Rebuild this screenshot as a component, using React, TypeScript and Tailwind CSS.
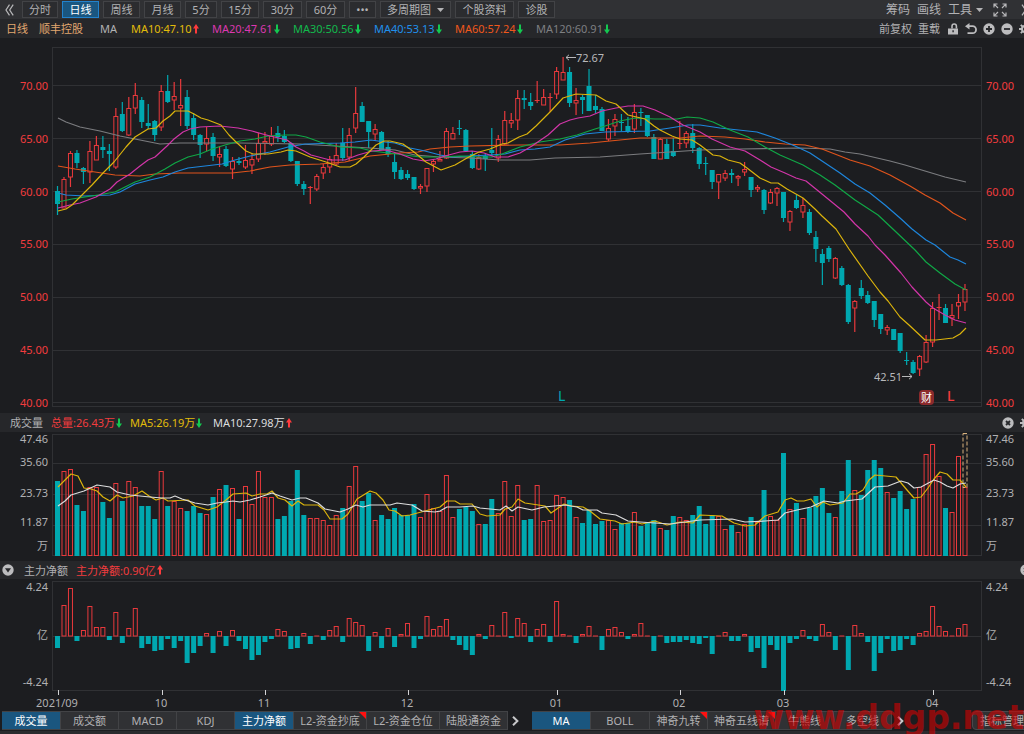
import React from "react";

const RED = "#e8393c";
const CYAN = "#00a8b0";
const GRID = "#303134";

const PLOT_LEFT = 52;
const PLOT_WIDTH = 930;
const FIRST_X = 57.5;
const STEP = 6.482;
const barX = (i: number) => FIRST_X + STEP * i;
const leftPercent = (x: number) => `${((x - PLOT_LEFT) / PLOT_WIDTH) * 100}%`;

/* direction, then high / body top / body bottom / low */
const CANDLES = `d186,191,204,215 u177,179,208,208 u151,153,177,187 d150,153,163,168 d167,168,172,184 u141,151,172,183 u136,145,160,160 d136,147,150,158 d144,151,154,171 u108,116,167,169
d102,114,131,132 u97,108,135,136 u83,95,108,114 d97,100,122,128 d104,123,126,129 d120,121,135,141 u85,91,127,131 d75,91,102,103 u82,96,100,110 u79,105,108,126
d90,97,126,129 d113,118,135,140 d134,135,145,158 u127,138,144,151 d133,137,156,161 u146,154,157,167 d146,149,166,167 u157,161,169,179 d157,161,163,165 u145,160,167,169
u154,159,165,174 u133,143,159,162 u132,141,143,155 u127,136,144,146 d126,133,137,142 d130,136,142,143 d142,143,161,162 d161,161,184,186 d181,184,189,195 u186,187,188,204
u174,176,189,191 u164,167,173,179 u156,159,167,173 u143,155,164,165 d128,143,158,161 u128,135,157,161 u87,113,128,133 d102,106,122,122 d121,121,132,148 u124,129,134,141
d131,132,150,150 d141,147,154,157 d154,162,172,179 d167,170,179,180 d170,174,178,180 d177,177,189,190 u184,186,188,194 u168,168,186,192 u159,161,164,172 u151,159,161,161
u128,131,158,159 u127,133,139,139 d120,128,129,135 d129,130,151,152 d151,154,168,169 u154,157,169,170 d154,156,159,171 d128,150,153,156 u135,139,158,162 u111,120,144,145
u113,120,123,128 u90,98,120,130 d90,98,100,109 d93,102,106,110 u81,100,101,103 u89,97,105,105 u93,97,98,112 u67,71,94,99 u57,72,80,80 d67,72,103,107
u88,100,103,115 d95,97,100,114 d69,86,111,111 d95,106,110,113 d107,109,131,131 u119,128,139,141 u114,119,126,136 d114,122,123,131 d117,126,132,133 u104,112,129,133
d108,112,113,126 d115,115,136,137 d134,137,159,159 u138,139,159,159 d139,144,159,159 d138,151,156,157 u121,143,144,149 u131,133,143,148 d124,133,148,153 d147,148,164,169
d157,163,164,175 d170,170,182,189 u174,174,182,199 u170,173,178,181 d169,173,175,183 u175,176,178,186 u162,169,172,176 d177,177,190,197 u185,187,189,192 d189,190,210,214
u189,192,203,204 u187,188,193,206 d192,192,218,222 u210,211,222,231 d195,200,208,209 u198,205,212,218 d209,212,233,235 d231,237,249,262 d249,254,263,285 d246,248,259,262
u257,258,278,279 d266,268,285,286 d284,285,322,324 u300,301,308,332 d280,288,296,299 d291,295,303,304 d301,301,320,327 d314,314,329,334 u325,327,330,335 d329,329,340,340
d333,333,351,353 d352,360,361,365 d360,362,373,374 u355,356,369,376 u335,342,362,363 u302,308,342,347 u294,307,308,320 d304,308,323,323 u304,315,318,326 u294,302,306,319
u284,289,302,311`
  .split(/\s+/)
  .map((s) => ({ up: s[0] === "u", v: s.slice(1).split(",").map(Number) }));

const VOLUME_TOPS = [
  481, 471, 469, 505, 511, 487, 487, 502, 518, 483, 501, 481, 487, 506, 506, 519, 471, 506, 501, 508,
  511, 506, 513, 514, 497, 489, 485, 488, 519, 486, 504, 471, 497, 497, 519, 516, 501, 470, 515, 518,
  518, 520, 525, 515, 508, 486, 466, 501, 493, 520, 515, 519, 508, 515, 515, 504, 517, 494, 508, 511,
  475, 517, 509, 507, 511, 524, 524, 499, 513, 481, 516, 485, 520, 519, 485, 521, 520, 495, 497, 500,
  517, 523, 510, 524, 521, 520, 529, 523, 523, 512, 526, 522, 520, 528, 530, 516, 517, 520, 515, 506,
  524, 515, 516, 529, 525, 532, 524, 517, 522, 490, 516, 520, 453, 509, 503, 518, 508, 496, 488, 513,
  517, 491, 460, 490, 495, 470, 460, 468, 492, 498, 491, 509, 499, 487, 454, 444, 476, 508, 512, 456,
  487,
];

const FLOWS = [
  -12, 31, 48, -5, 6, 30, 9, 9, -4, 24, -7, 8, 28, -12, -8, -15, -14, -3, -12, -5,
  -27, -17, -10, 3, -17, 5, -10, 6, -5, -13, -24, -19, -6, -3, 7, 5, -13, -12, 3, -8,
  1, -4, 6, 10, -6, 18, 14, 11, -15, 4, -12, 8, -11, 2, 13, -12, -3, 20, 7, 10,
  17, -4, -9, -14, -19, 2, -3, 11, 0, 24, -2, 18, 13, -6, 7, 12, -6, 35, 2, 0,
  -7, 2, 10, 1, -14, 7, 9, 4, -3, 2, 13, 0, -15, 0, -7, -6, -6, -4, -7, -8,
  -2, -18, 0, 4, -5, -5, 2, -16, -12, -32, -9, -14, -55, -7, -3, 6, -3, -5, 12, 4,
  -14, 0, -34, 11, 3, -6, -35, -17, -3, -15, -14, -3, -9, 3, 5, 30, 10, 5, 0, 8,
  12,
];

const PRICE_LINES = [
  { color: "#7b7c7f", points: "58,118 66,122 80,127 100,131 120,136 140,140 160,144 180,143 240,143 300,144 335,146 370,148 395,150 415,155 440,157 470,158 500,160 530,160 555,158 600,157 640,154 670,152 700,150 740,149 800,148 830,149 845,152 860,154 890,161 905,165 925,171 945,177 966,182" },
  { color: "#e0541c", points: "58,166 75,169 95,172 115,175 140,176 155,174 180,173 232,173 250,171 270,167 290,165 320,164 345,162 370,156 400,153 418,152 430,149 450,147 470,146 520,145 560,145 590,143 620,140 640,138 680,138 700,136 725,137 745,139 765,142 785,144 805,145 822,149 840,156 850,160 870,166 890,175 910,186 925,195 940,203 953,213 966,220" },
  { color: "#1e86dc", points: "58,193 66,195 85,196 110,195 120,192 135,184 150,180 163,177 175,172 188,168 205,166 222,164 235,160 250,156 270,152 288,147 305,144 340,143 355,142 371,140 385,142 395,143 410,148 425,151 440,155 452,157 470,156 490,155 505,154 520,150 535,149 550,147 565,140 585,134 605,132 650,131 670,128 688,125 700,125 720,128 757,132 775,138 795,146 810,153 828,165 840,173 855,184 870,193 885,205 900,218 912,229 926,240 935,245 950,257 958,260 966,264" },
  { color: "#10a846", points: "58,202 72,199 85,197 98,195 115,192 125,187 135,182 150,177 165,169 175,163 188,157 200,154 212,149 225,145 240,141 255,139 268,136 285,135 296,135 306,137 320,142 340,147 360,148 372,151 388,153 405,155 420,157 440,157 460,156 480,157 492,157 502,154 520,147 540,142 560,139 577,135 595,129 605,126 620,121 635,118 655,119 677,119 687,117 700,118 713,122 730,130 748,137 765,147 780,155 803,165 820,175 835,185 855,200 878,215 895,231 915,250 926,262 940,273 955,284 966,290" },
  { color: "#d235a8", points: "58,208 70,205 80,203 96,197 110,189 117,182 130,174 140,166 148,160 155,157 167,146 174,139 183,132 190,129 200,127 220,126 238,128 252,131 270,136 287,140 296,147 304,151 311,155 330,160 345,160 358,155 372,151 386,150 400,154 413,159 424,161 436,159 445,156 460,152 472,151 484,153 495,157 508,157 520,153 532,146 548,135 560,124 570,120 578,118 590,116 602,111 616,108 628,106 643,106 655,110 670,117 683,125 700,132 712,139 730,147 745,151 760,160 771,167 785,173 796,178 806,181 822,194 844,212 855,224 868,236 875,245 885,255 901,273 912,287 926,302 933,308 945,315 955,320 966,323" },
  { color: "#dcb40c", points: "58,211 66,209 72,205 80,197 92,185 103,173 114,162 126,147 135,137 148,129 156,128 163,121 170,116 175,111 188,111 194,114 201,118 208,120 221,125 229,135 236,142 246,151 253,154 268,154 281,152 288,150 296,151 310,157 326,162 340,167 350,167 356,164 364,157 376,145 384,141 390,141 403,144 414,152 426,162 441,170 455,165 467,158 479,152 490,149 502,144 508,143 519,137 527,134 536,126 550,112 563,98 576,94 596,95 606,101 616,104 628,115 645,119 654,126 660,130 672,136 680,139 692,140 700,145 713,155 720,156 728,160 740,163 747,168 760,178 771,183 778,183 787,189 803,198 815,209 822,216 836,229 849,249 868,276 880,292 888,301 900,317 909,325 925,340 936,340 953,338 960,334 966,328" },
];

const VOLUME_LINES = [
  { color: "#dcb40c", points: "58,487 71,474 78,476 84,488 91,489 97,491 103,497 110,501 117,495 123,498 133,496 142,491 149,496 156,500 163,498 168,501 188,500 195,506 208,510 217,507 226,500 233,494 246,493 252,496 260,494 267,494 272,491 278,498 285,500 292,506 298,501 304,505 318,505 324,510 330,519 342,519 348,514 357,499 370,491 376,493 383,500 389,510 395,511 402,516 410,515 425,511 440,507 447,501 455,501 460,504 472,504 480,514 487,516 500,515 505,509 512,507 518,499 525,503 545,506 551,513 564,504 571,506 583,507 590,511 600,519 615,521 622,524 635,522 642,524 655,521 667,525 680,522 693,523 700,515 722,516 734,523 745,526 755,525 765,516 778,512 785,500 791,498 797,501 804,501 811,499 817,507 823,502 830,505 843,503 850,494 856,494 863,490 869,480 875,475 896,477 907,490 914,498 921,497 928,488 934,479 940,472 947,474 953,480 960,480 966,487" },
  { color: "#dcdcdc", points: "58,506 65,501 71,495 84,491 97,485 110,487 117,492 130,495 150,497 162,498 170,498 175,496 182,499 195,503 208,505 217,503 226,502 233,501 240,502 250,500 260,497 272,493 280,496 292,500 300,498 306,498 318,503 325,509 340,512 348,509 356,505 363,507 370,505 390,505 397,503 412,505 422,511 435,512 440,511 447,507 460,507 473,506 480,508 500,510 506,506 512,511 518,507 532,510 544,507 565,505 577,507 583,510 597,510 602,513 616,515 628,521 640,522 670,524 685,522 700,520 732,519 745,522 765,521 778,520 785,513 797,510 811,507 824,501 838,503 845,501 862,499 875,487 888,486 901,481 908,483 914,488 921,487 934,480 940,482 947,486 953,488 960,484 966,483" },
];

function Arrow({ up }: { up: boolean }) {
  return (
    <svg className={up ? "ml-px h-[10px] w-[6px] shrink-0" : "ml-px h-[10px] w-[6px] shrink-0 rotate-180"} viewBox="0 0 6 10" aria-hidden="true">
      <path d="M3 0 6 4.4H4V9.5H2V4.4H0Z" fill={up ? "#ff3a3c" : "#14c850"} />
    </svg>
  );
}

function Caret() {
  return (
    <svg className="h-1 w-[7px] shrink-0" viewBox="0 0 7 4" aria-hidden="true">
      <path d="M0 0H7L3.5 4Z" fill="#b4b4b6" />
    </svg>
  );
}

function Chevron({ color }: { color: string }) {
  return (
    <svg className="h-[10px] w-[7px]" viewBox="0 0 7 10" fill="none" stroke={color} strokeWidth="2" aria-hidden="true">
      <path d="M1 .8 5.4 5 1 9.2" />
    </svg>
  );
}

function Gear() {
  return (
    <svg className="size-3" viewBox="0 0 12 12" fill="none" aria-hidden="true">
      <circle cx="6" cy="6" r="3" stroke="#bcbcbe" strokeWidth="2" />
      <path d="M6 0V3M6 9V12M0 6H3M9 6H12M1.8 1.8 3.8 3.8M8.2 8.2 10.2 10.2M10.2 1.8 8.2 3.8M3.8 8.2 1.8 10.2" stroke="#bcbcbe" strokeWidth="1.8" />
    </svg>
  );
}

function RoundIcon({ path, filled }: { path: string; filled?: boolean }) {
  return (
    <svg className="size-3" viewBox="0 0 12 12" aria-hidden="true">
      <circle cx="6" cy="6" r="5.7" fill="#bcbcbe" />
      <path d={path} fill={filled ? "#27282b" : "none"} stroke="#27282b" strokeWidth={filled ? "0" : "1.8"} />
    </svg>
  );
}

const PERIODS = [
  { label: "分时", size: "w-9" },
  { label: "日线", size: "w-[37px]", active: true },
  { label: "周线", size: "w-[37px]" },
  { label: "月线", size: "w-[37px]" },
  { label: "5分", size: "w-8" },
  { label: "15分", size: "w-[38px]" },
  { label: "30分", size: "w-[39px]" },
  { label: "60分", size: "w-[39px]" },
  { label: "•••", size: "w-[27px]" },
  { label: "多周期图", size: "w-[71px]", menu: true },
  { label: "个股资料", size: "w-[59px]" },
  { label: "诊股", size: "w-[37px]" },
];

function Toolbar() {
  return (
    <header className="flex h-[19px] items-center overflow-hidden bg-[#303134] text-[#b2b2b4]">
      <button type="button" aria-label="收起" className="flex w-[22px] shrink-0 items-center pl-[5px]">
        <svg className="h-3 w-[9px]" viewBox="0 0 9 12" fill="none" stroke="#b8b8ba" strokeWidth="1.2" aria-hidden="true">
          <path d="M4.5.6 1 6 4.5 11.4M8.2.6 4.7 6 8.2 11.4" />
        </svg>
      </button>
      <nav className="flex shrink-0 gap-1">
        {PERIODS.map((p) => (
          <button
            key={p.label}
            type="button"
            className={`flex h-[17px] items-center justify-center gap-[6px] border leading-none ${p.size} ${
              p.active ? "border-[#2282cc] bg-[#1a5680] text-white" : "border-[#424346] bg-[#2b2c2f]"
            }`}
          >
            {p.label}
            {p.menu && <Caret />}
          </button>
        ))}
      </nav>
      <div className="-mr-[7px] ml-auto flex shrink-0 items-center text-xs leading-none">
        <button type="button">筹码</button>
        <button type="button" className="ml-[7px]">画线</button>
        <button type="button" className="ml-[7px] flex items-center gap-1">
          工具
          <Caret />
        </button>
        <button type="button" aria-label="全屏" className="ml-[10px]">
          <svg className="size-[14px]" viewBox="0 0 14 14" fill="none" stroke="#b8b8ba" strokeWidth="1.2" aria-hidden="true">
            <path d="M1 4.5V1H4.5M1.2 1.2 5 5M9.5 1H13V4.5M12.8 1.2 9 5M1 9.5V13H4.5M1.2 12.8 5 9M9.5 13H13V9.5M12.8 12.8 9 9" />
          </svg>
        </button>
        <button type="button" aria-label="展开" className="ml-[14px]">
          <svg className="h-3 w-[10px]" viewBox="0 0 10 12" fill="none" stroke="#b8b8ba" strokeWidth="1.2" aria-hidden="true">
            <path d="M1 .6 4.5 6 1 11.4M5.2.6 8.7 6 5.2 11.4" />
          </svg>
        </button>
      </div>
    </header>
  );
}

const AVERAGES = [
  { text: "MA10:47.10", tone: "text-[#e2bc0a]", up: true },
  { text: "MA20:47.61", tone: "text-[#dc38b0]", up: false },
  { text: "MA30:50.56", tone: "text-[#12b84c]", up: false },
  { text: "MA40:53.13", tone: "text-[#2090ec]", up: false },
  { text: "MA60:57.24", tone: "text-[#f0581c]", up: false },
  { text: "MA120:60.91", tone: "text-[#7e7f82]", up: false },
];

function InfoBar() {
  return (
    <div className="flex h-[19px] items-center overflow-hidden bg-[#26272a] leading-none text-[#b2b2b4]">
      <span className="ml-[6px] text-[#e2a870]">日线</span>
      <span className="ml-[11px] text-[#e2a870]">顺丰控股</span>
      <span className="ml-[17px] w-[31px]">MA</span>
      {AVERAGES.map((a) => (
        <span key={a.text} className={`flex min-w-[81px] shrink-0 items-center ${a.tone}`}>
          {a.text}
          <Arrow up={a.up} />
        </span>
      ))}
      <div className="-mr-[7px] ml-auto flex shrink-0 items-center gap-[6px]">
        <button type="button">前复权</button>
        <button type="button">重载</button>
        <button type="button" aria-label="锁定" className="ml-[1px]">
          <svg className="size-3" viewBox="0 0 12 12" aria-hidden="true">
            <path d="M1 5.5H11V11.5H1Z" fill="#bcbcbe" />
            <path d="M5 5.5V3.2a2.2 2.2 0 0 1 4.4 0V5.5" fill="none" stroke="#bcbcbe" strokeWidth="1.6" />
            <path d="M5.4 7.2H6.8V9.2H5.4Z" fill="#26272a" />
          </svg>
        </button>
        <button type="button" aria-label="撤销">
          <svg className="size-3" viewBox="0 0 12 12" fill="none" aria-hidden="true">
            <path d="M3.5 3.2H7.6a3.3 3.3 0 0 1 0 6.9H2.5" stroke="#bcbcbe" strokeWidth="1.8" />
            <path d="M0 3.2 4.5 0V6.4Z" fill="#bcbcbe" />
          </svg>
        </button>
        <button type="button" aria-label="放大"><RoundIcon path="M6 3V9M3 6H9" /></button>
        <button type="button" aria-label="缩小"><RoundIcon path="M3 6H9" /></button>
        <button type="button" aria-label="设置"><Gear /></button>
      </div>
    </div>
  );
}

function Axis({ side, labels }: { side: "left" | "right"; labels: { text: string; size: string }[] }) {
  return (
    <div className={side === "left" ? "flex flex-col items-end pr-1" : "flex flex-col items-start pl-1"}>
      {labels.map((l) => (
        <span key={l.text} className={`flex items-center leading-none ${l.size}`}>{l.text}</span>
      ))}
    </div>
  );
}

const PRICES = ["70.00", "65.00", "60.00", "55.00", "50.00", "45.00", "40.00"];

function PriceAxis({ side }: { side: "left" | "right" }) {
  return (
    <div
      className={`flex flex-col justify-between pb-[2px] pt-10 leading-4 text-[#f23c3e] ${
        side === "left" ? "items-end pr-1" : "items-start pl-1"
      }`}
    >
      {PRICES.map((p) => (
        <span key={p}>{p}</span>
      ))}
    </div>
  );
}

function Lines({ lines }: { lines: { color: string; points: string }[] }) {
  return (
    <>
      {lines.map((l) => (
        <polyline key={l.color} points={l.points} fill="none" stroke={l.color} strokeWidth="1.2" strokeLinejoin="round" />
      ))}
    </>
  );
}

function Marker({ x, top, children }: { x: number; top: string; children: React.ReactNode }) {
  return (
    <span className={`absolute flex items-center leading-none ${top}`} style={{ left: leftPercent(x) }}>
      {children}
    </span>
  );
}

function PricePanel() {
  return (
    <section className="grid h-[375px] grid-cols-[52px_minmax(0,1fr)_42px]">
      <PriceAxis side="left" />
      <div className="relative">
        <svg className="block h-full w-full" viewBox="52 38 930 375" preserveAspectRatio="none" role="img" aria-label="K线图">
          <g stroke={GRID}>
            {[47.5, 85.5, 138.5, 191.5, 244.5, 297.5, 350.5, 402.5, 406.5].map((y) => (
              <path key={y} d={`M52 ${y}H982`} />
            ))}
            <path d="M52.5 47V406M981.5 47V406" />
          </g>
          {CANDLES.map(({ up, v: [h, t, b, l] }, i) => {
            const x = barX(i);
            const color = up ? RED : CYAN;
            const height = Math.max(b - t, 1);
            return (
              <g key={i} stroke={color}>
                <path d={`M${x} ${h}V${t}M${x} ${b}V${l}`} strokeWidth="1.2" />
                {up && height > 1 ? (
                  <rect x={x - 2} y={t + 0.5} width="4" height={height - 0.5} fill="none" />
                ) : (
                  <rect x={x - 2.5} y={t} width="5" height={height} fill={color} stroke="none" />
                )}
              </g>
            );
          })}
          <Lines lines={PRICE_LINES} />
        </svg>
        <Marker x={565} top="top-[14px]">
          <svg className="h-[7px] w-[11px]" viewBox="0 0 11 7" fill="none" stroke="#b8b8ba" aria-hidden="true">
            <path d="M11 3.5H1M4 .8 1 3.5 4 6.2" />
          </svg>
          <span className="text-[#b8b8ba]">72.67</span>
        </Marker>
        <Marker x={874} top="top-[333px]">
          <span className="text-[#b8b8ba]">42.51</span>
          <svg className="h-[7px] w-[11px]" viewBox="0 0 11 7" fill="none" stroke="#b8b8ba" aria-hidden="true">
            <path d="M0 3.5H10M7 .8 10 3.5 7 6.2" />
          </svg>
        </Marker>
        <Marker x={558} top="top-[351px]">
          <span className="text-sm leading-none text-[#00a8b0]">L</span>
        </Marker>
        <Marker x={919} top="top-[352px]">
          <span className="flex h-[15px] w-[15px] items-center justify-center rounded-sm bg-[#8c2a2c] text-white">财</span>
        </Marker>
        <Marker x={947} top="top-[351px]">
          <span className="text-sm font-medium leading-none text-[#f23c3e]">L</span>
        </Marker>
      </div>
      <PriceAxis side="right" />
    </section>
  );
}

const VOLUME_AXIS = [
  { text: "47.46", size: "h-3" },
  { text: "35.60", size: "h-[34px]" },
  { text: "23.73", size: "h-7" },
  { text: "11.87", size: "h-[31px]" },
  { text: "万", size: "h-4" },
];

function VolumePanel() {
  return (
    <>
      <div className="flex h-[19px] items-center overflow-hidden bg-[#26272a] leading-none">
        <h2 className="ml-[10px] w-[41px]">成交量</h2>
        <span className="flex w-[79px] items-center text-[#f23c3e]">总量:26.43万<Arrow up={false} /></span>
        <span className="flex w-[83px] items-center text-[#e2bc0a]">MA5:26.19万<Arrow up={false} /></span>
        <span className="flex items-center text-[#dcdcde]">MA10:27.98万<Arrow up /></span>
        <div className="-mr-2 ml-auto flex shrink-0 gap-[6px]">
          <button type="button" aria-label="关闭"><RoundIcon path="M4 4 8 8M8 4 4 8" /></button>
          <button type="button" aria-label="成交量设置"><Gear /></button>
        </div>
      </div>
      <section className="grid h-[129px] grid-cols-[52px_minmax(0,1fr)_42px]">
        <Axis side="left" labels={VOLUME_AXIS} />
        <svg className="block h-full w-full" viewBox="52 432 930 129" preserveAspectRatio="none" role="img" aria-label="成交量">
          <g stroke={GRID}>
            {[434.5, 463.5, 494.5, 525.5, 555.5].map((y) => (
              <path key={y} d={`M52 ${y}H982`} />
            ))}
            <path d="M52.5 434V556M981.5 434V556" />
          </g>
          {VOLUME_TOPS.map((top, i) => {
            const x = barX(i);
            return CANDLES[i].up ? (
              <rect key={i} x={x - 2} y={top + 0.5} width="4" height={555 - top} fill="none" stroke={RED} />
            ) : (
              <rect key={i} x={x - 2.5} y={top} width="5" height={556 - top} fill={CYAN} />
            );
          })}
          <rect x="963" y="433.5" width="4" height="54" fill="none" stroke="#d8b27c" strokeDasharray="4 2" />
          <Lines lines={VOLUME_LINES} />
        </svg>
        <Axis side="right" labels={VOLUME_AXIS} />
      </section>
    </>
  );
}

const FLOW_AXIS = [
  { text: "4.24", size: "h-[14px]" },
  { text: "亿", size: "h-[82px]" },
  { text: "-4.24", size: "h-3" },
];

const DATES = [
  { x: 58, text: "2021/09" },
  { x: 162, text: "10" },
  { x: 265, text: "11" },
  { x: 408, text: "12" },
  { x: 557, text: "01" },
  { x: 680, text: "02" },
  { x: 784, text: "03" },
  { x: 933, text: "04" },
];

function FlowPanel() {
  return (
    <>
      <div className="flex h-[18px] items-center overflow-hidden bg-[#26272a] leading-none">
        <button type="button" aria-label="选择指标" className="ml-[2px] w-[22px]"><RoundIcon path="M3 4.2H9L6 8.6Z" filled /></button>
        <h2 className="w-[52px]">主力净额</h2>
        <span className="flex items-center text-[#f23c3e]">主力净额:0.90亿<Arrow up /></span>
        <button type="button" aria-label="关闭" className="-mr-2 ml-auto shrink-0"><RoundIcon path="M4 4 8 8M8 4 4 8" /></button>
      </div>
      <section className="grid h-[131px] grid-cols-[52px_minmax(0,1fr)_42px]">
        <Axis side="left" labels={FLOW_AXIS} />
        <div className="relative">
          <svg className="block h-full w-full" viewBox="52 579 930 131" preserveAspectRatio="none" role="img" aria-label="主力净额">
            <g stroke={GRID}>
              <path d="M52 581.5H982M52 636.5H982M52 690.5H982M52.5 581V691M981.5 581V691" />
            </g>
            {FLOWS.map((f, i) => {
              const x = barX(i);
              if (f < 0) return <rect key={i} x={x - 2.5} y="636" width="5" height={-f} fill={CYAN} />;
              if (f < 2) return <rect key={i} x={x - 2.5} y="635.5" width="5" height="1" fill={RED} />;
              return <rect key={i} x={x - 2} y={636.5 - f} width="4" height={f - 0.5} fill="none" stroke={RED} />;
            })}
            {DATES.map((d) => (
              <path key={d.text} d={`M${d.x + 0.5} 690V695`} stroke="#d4d4d6" />
            ))}
          </svg>
          {DATES.map((d) => (
            <span key={d.text} className="absolute top-[118px] -translate-x-1/2 leading-none" style={{ left: leftPercent(d.x - 1) }}>
              {d.text}
            </span>
          ))}
        </div>
        <Axis side="right" labels={FLOW_AXIS} />
      </section>
    </>
  );
}

type TabItem = { label: string; size: string; active?: boolean; flag?: boolean };

const INDICATORS: TabItem[] = [
  { label: "成交量", size: "w-[59px]", active: true },
  { label: "成交额", size: "w-[58px]" },
  { label: "MACD", size: "w-[58px]" },
  { label: "KDJ", size: "w-[58px]" },
  { label: "主力净额", size: "w-[59px]", active: true },
  { label: "L2-资金抄底", size: "w-[73px]", flag: true },
  { label: "L2-资金仓位", size: "w-[73px]" },
  { label: "陆股通资金", size: "w-[68px]" },
];

const OVERLAYS: TabItem[] = [
  { label: "MA", size: "w-[59px]", active: true },
  { label: "BOLL", size: "w-[59px]" },
  { label: "神奇九转", size: "w-[58px]", flag: true },
  { label: "神奇五线谱", size: "w-[68px]", flag: true },
  { label: "牛熊线", size: "w-[58px]" },
  { label: "多空线", size: "w-[58px]" },
];

function Tabs({ items }: { items: TabItem[] }) {
  return (
    <nav className="flex shrink-0">
      {items.map((t) => (
        <button
          key={t.label}
          type="button"
          className={`relative flex h-[19px] items-center justify-center whitespace-nowrap border-r border-y border-[#424346] leading-none ${t.size} ${
            t.active ? "bg-[#1a567f] text-white" : "bg-[#303134]"
          }`}
        >
          {t.label}
          {t.flag && (
            <svg className="absolute right-0 top-0 size-[7px]" viewBox="0 0 7 7" aria-hidden="true">
              <path d="M0 0H7V7Z" fill="#ff1010" />
            </svg>
          )}
        </button>
      ))}
    </nav>
  );
}

export default function App() {
  return (
    <main className="relative overflow-hidden bg-[#1c1d20] font-['Noto_Sans','Noto_Sans_CJK_SC',sans-serif] text-[11px] text-[#b0b0b2]">
      <Toolbar />
      <InfoBar />
      <PricePanel />
      <VolumePanel />
      <FlowPanel />
      <footer className="flex h-6 items-start overflow-hidden border-b-[3px] border-[#2a2b2e] pl-[2px] pt-px">
        <Tabs items={INDICATORS} />
        <button type="button" aria-label="更多指标" className="flex h-[19px] w-6 shrink-0 items-center pl-[4px]">
          <Chevron color="#c8c8ca" />
        </button>
        <Tabs items={OVERLAYS} />
        <button type="button" aria-label="更多主图指标" className="flex h-[19px] w-5 shrink-0 items-center pl-[5px]">
          <Chevron color="#c8c8ca" />
        </button>
        <button
          type="button"
          className="-mr-1 ml-auto flex h-[19px] w-[56px] shrink-0 items-center justify-start whitespace-nowrap rounded-sm border border-[#48494c] bg-[#303134] pl-[7px] leading-none"
        >
          指标管理
        </button>
      </footer>
      <div className="pointer-events-none absolute bottom-0 right-0 font-['DejaVu_Sans',sans-serif] text-[33px] font-bold leading-8 text-[#d40000]/60">
        www.ddgp.net
      </div>
    </main>
  );
}
